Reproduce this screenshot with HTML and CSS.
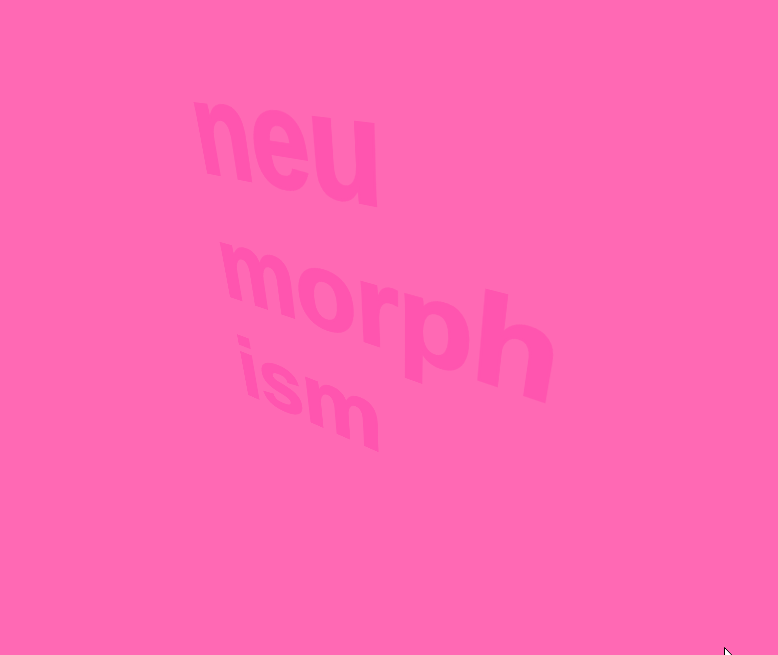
FILE: index.html
```html
<!DOCTYPE html>
<html lang="en">
<head>
  <meta charset="UTF-8" />
  <meta name="viewport" content="width=device-width,initial-scale=1" />
  <title>neumorphism</title>
  <link rel="stylesheet" href="styles.css">
</head>
<body>
  <h1 class="title">neu<br>morph<br>ism</h1>

  <!-- mouse pointer caught at the bottom edge -->
  <svg class="pointer" viewBox="0 0 12 8" width="12" height="8">
    <path d="M0.5 0.5V16L4 12.6L6.4 18L8.8 17L6.4 11.6H11.3Z"/>
  </svg>
</body>
</html>
```

FILE: styles.css
```css
* {
  margin: 0;
  padding: 0;
  box-sizing: border-box;
}

html, body {
  height: 100%;
  overflow: hidden;
}

body {
  position: relative;
  background: #ff69b4;
}

.title {
  width: fit-content;
  font-family: "Liberation Sans", Arial, sans-serif;
  font-size: 100px;
  font-weight: bold;
  line-height: 115px;
  letter-spacing: -0.8px;
  color: #ff55af;
  -webkit-text-stroke: 2px #ff55af;
  transform-origin: 0 0;
  transform: matrix3d(0.65, -0.006, 0, -0.00102,
                      0.4652, 1.42, 0, 0.001154,
                      0, 0, 1, 0,
                      160.4, 41.9, 0, 0.9008);
}

.pointer {
  position: absolute;
  left: 724px;
  top: 647px;
  fill: #fff;
  stroke: #000;
  stroke-width: 1;
}
```
